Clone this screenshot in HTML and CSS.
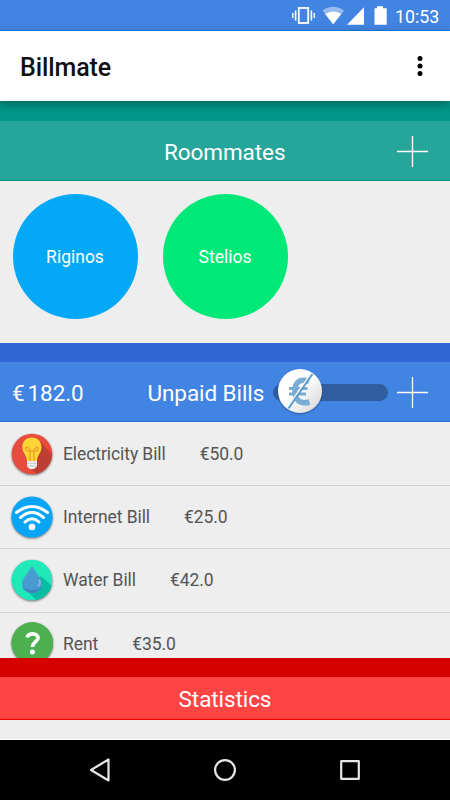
FILE: index.html
```html
<!DOCTYPE html>
<html lang="en">
<head>
    <meta charset="UTF-8">
    <meta name="viewport" content="width=device-width, initial-scale=1">
    <title>Billmate</title>
    <link rel="stylesheet" href="styles.css">
</head>
<body>
    <div class="status-bar">
        <svg class="status-icons" width="98" height="31" viewBox="0 0 98 31" fill="#fff">
            <rect x="6.800" y="8" width="9.400" height="15" fill="none" stroke="#fff" stroke-width="1.800"/>
            <path d="M0 13h1.500v5H0zM2.800 10.500h1.600v10H2.800zM18.600 10.500h1.600v10h-1.600zM21.500 13h1.500v5h-1.500z"/>
            <path d="M30.500 10.500Q41.200 3 52 10.500L41.200 24.200z" opacity=".45"/>
            <path d="M33.200 14Q41.200 9 49.200 14L41.200 24.200z"/>
            <path d="M55 24.700L72 7.200V24.700z"/>
            <path d="M82.500 8.200h2.500V6.200h6v2h3.700v16.500H82.500z"/>
        </svg>
        <span class="clock">10:53</span>
    </div>

    <header class="app-bar">
        <h1>Billmate</h1>
        <svg width="6" height="22" viewBox="0 0 6 22">
            <circle cx="3" cy="3.500" r="2.500"/><circle cx="3" cy="11" r="2.500"/><circle cx="3" cy="18.500" r="2.500"/>
        </svg>
    </header>

    <section class="roommates">
        <div class="section-header teal">
            <h2>Roommates</h2>
            <svg class="add" width="31" height="31" viewBox="0 0 31 31"><path d="M0 15.500h31M15.500 0v31"/></svg>
        </div>
        <div class="people">
            <div class="person blue">Riginos</div>
            <div class="person green">Stelios</div>
        </div>
    </section>

    <section class="bills">
        <div class="section-header blue-header">
            <span class="total"><span class="currency">€</span>182.0</span>
            <h2>Unpaid Bills</h2>
            <div class="switch">
                <div class="thumb">
                    <svg width="44" height="44" viewBox="0 0 44 44" fill="none" stroke="#78acd3">
                        <path d="M31 12.500C23 9.500 17 12 17 22C17 32 23 35.500 31.500 33" stroke-width="5.500"/>
                        <path d="M11 19.500h18.500M11 25h17" stroke-width="3.200"/>
                        <path d="M33 4.500L9.500 38" stroke="#f3f6f8" stroke-width="1.500"/>
                        <path d="M34.500 5L10.500 39.500" stroke="#5e9dca" stroke-width="2"/>
                    </svg>
                </div>
            </div>
            <svg class="add" width="31" height="31" viewBox="0 0 31 31"><path d="M0 15.500h31M15.500 0v31"/></svg>
        </div>
        <ul class="bill-list">
            <li>
                <svg class="bill-icon" width="42" height="42" viewBox="0 0 42 42">
                    <circle cx="21" cy="21" r="20.300" fill="#e74c3c"/>
                    <path d="M29 8L40.700 21.500A20.300 20.300 0 0 1 25 40.900L17 32z" fill="#bd3e32"/>
                    <path d="M21 4.500C14.500 4.500 11.300 9 11.300 14C11.300 20 16 22 16 28h10C26 22 30.500 20 30.500 14C30.500 9 27 4.500 21 4.500z" fill="#fdd535"/>
                    <path d="M19 28V18.500C13 17.500 14 13 17 14.500C18.500 15.500 19 18.500 21 18.500S23.500 15.500 25 14.500C28 13 29 17.500 23 18.500V28" fill="none" stroke="#eda22a" stroke-width="1.500"/>
                    <path d="M16 28h10v5.500l-3 2.500h-4l-3-2.500z" fill="#f2f2f2"/>
                    <path d="M16 30.200h10M16 33h10" stroke="#c5c5c5"/>
                </svg>
                <span>Electricity Bill</span><span class="amount">€50.0</span>
            </li>
            <li>
                <svg class="bill-icon" width="42" height="42" viewBox="0 0 42 42">
                    <circle cx="21" cy="21" r="20.600" fill="#08a5f7"/>
                    <g fill="none" stroke="#fff" stroke-width="3" stroke-linecap="round">
                        <path d="M5.500 16.500Q21 4.500 36.500 16.500"/>
                        <path d="M9.500 21.500Q21 11.500 32.500 21.500"/>
                        <path d="M14 26Q21 19.500 28 26"/>
                    </g>
                    <circle cx="21" cy="31" r="3.300" fill="#fff"/>
                </svg>
                <span>Internet Bill</span><span class="amount">€25.0</span>
            </li>
            <li>
                <svg class="bill-icon" width="42" height="42" viewBox="0 0 42 42">
                    <circle cx="21" cy="21" r="20.300" fill="#20e8b9"/>
                    <path d="M30 17L40.700 27A20.300 20.300 0 0 1 25 40.900L14 30z" fill="#04bda2"/>
                    <path d="M21 7C17.500 14 11 19 11 25a10 9.300 0 0 0 20 0C31 19 24.500 14 21 7z" fill="#489bd0"/>
                    <path d="M11.200 26.500Q14 31 21 31T30.800 26.500A10 9.300 0 0 1 11.200 26.500z" fill="#4280bc"/>
                    <path d="M28 20.500Q30.500 24 27 27.500" fill="none" stroke="#7eb9df" stroke-width="1.800"/>
                </svg>
                <span>Water Bill</span><span class="amount">€42.0</span>
            </li>
            <li>
                <svg class="bill-icon" width="42" height="42" viewBox="0 0 42 42">
                    <circle cx="21.300" cy="21" r="20.900" fill="#4caf50"/>
                    <path d="M16.200 15.500C17 10.500 27 10.500 27 16C27 19.500 21.500 20 21.500 25" fill="none" stroke="#fff" stroke-width="3.700"/>
                    <circle cx="21.400" cy="30" r="2.500" fill="#fff"/>
                </svg>
                <span>Rent</span><span class="amount">€35.0</span>
            </li>
        </ul>
    </section>

    <section class="statistics">
        <div class="section-header red">
            <h2>Statistics</h2>
        </div>
    </section>

    <nav class="nav-bar">
        <svg width="22" height="24" viewBox="0 0 22 24"><path d="M19.500 1.500v21L2 12z"/></svg>
        <svg width="22" height="24" viewBox="0 0 22 24"><circle cx="11" cy="12" r="9.900"/></svg>
        <svg width="22" height="24" viewBox="0 0 22 24"><rect x="2.200" y="3.200" width="17.600" height="17.600"/></svg>
    </nav>
</body>
</html>
```

FILE: styles.css
```css
* { box-sizing: border-box; }
body { margin: 0; width: 450px; height: 800px; overflow: hidden; display: flex; flex-direction: column; background-color: #eee; font-family: Roboto, "Liberation Sans", sans-serif; }
h1, h2 { margin: 0; }
svg { display: block; flex-shrink: 0; }

.status-bar { height: 31px; flex-shrink: 0; display: flex; align-items: center; justify-content: flex-end; padding-right: 10px; background-color: #4284e2; border-bottom: 1px solid #0c7be2; color: #fff; }
.status-icons { margin-right: 5px; }
.clock { width: 45px; font-size: 17.8px; line-height: 31px; padding-top: 2px; white-space: nowrap; }

.app-bar { height: 70px; flex-shrink: 0; display: flex; align-items: center; justify-content: space-between; padding: 2px 27px 0 20px; background-color: #fff; position: relative; z-index: 1; box-shadow: 0 3px 9px rgba(0, 0, 0, 0.35); }
.app-bar h1 { font-size: 25px; font-weight: 500; letter-spacing: -0.1px; color: #111; }
.app-bar svg { margin-top: -2px; }

.section-header { display: flex; align-items: center; color: #fff; }
.section-header h2 { font-size: 22.5px; font-weight: 400; letter-spacing: -0.08px; line-height: 28px; white-space: nowrap; }
.add { fill: none; stroke: #fff; stroke-width: 1.3; }

.roommates { height: 242px; flex-shrink: 0; }
.teal { height: 80px; border-top: 20px solid #009688; border-bottom: 1px solid #009688; background-color: #26a69a; padding: 2px 22px 0 164px; justify-content: space-between; }
.people { display: flex; gap: 25px; padding: 12.5px; }
.person { width: 125px; height: 125px; border-radius: 50%; display: flex; align-items: center; justify-content: center; padding-top: 1px; color: #fff; font-size: 17.5px; }
.blue { background-color: #03a9f7; }
.green { background-color: #00e878; }

.bills { height: 315px; flex-shrink: 0; overflow: hidden; }
.blue-header { height: 79px; border-top: 19px solid #3067d5; border-bottom: 1px solid #2675dd; background-color: #4284e2; padding: 2px 22px 0 12px; }
.total { width: 135.5px; font-size: 22.5px; letter-spacing: -0.1px; line-height: 28px; }
.currency { margin-right: 3px; }
.switch { width: 115px; height: 17px; margin: -1px 9px 0 auto; border-radius: 9px; background-color: #2f5d9f; }
.thumb { width: 44px; height: 44px; margin: -14.5px 0 0 5px; border-radius: 50%; background: linear-gradient(135deg, #fff 45%, #d2d2d2); box-shadow: 0 1px 2px rgba(0, 0, 0, 0.35); }

.bill-list { list-style: none; margin: 0; padding: 1px 0 0; color: #555; font-size: 17.5px; letter-spacing: -0.08px; }
.bill-list li { height: 63.2px; display: flex; align-items: center; padding-left: 11px; border-bottom: 1px solid #cfcfcf; white-space: nowrap; }
.bill-icon { margin: -1px 10px 0 0; filter: drop-shadow(0 1px 1px rgba(0, 0, 0, 0.5)); }
.amount { margin-left: 34px; }

.statistics { height: 82px; flex-shrink: 0; border-bottom: 1px solid #fff; }
.red { height: 62px; border-top: 19px solid #d50000; border-bottom: 1px solid #f00; background-color: #f44; justify-content: center; padding-top: 2px; }

.nav-bar { height: 60px; flex-shrink: 0; display: flex; align-items: center; justify-content: space-between; padding: 0 89px; background-color: #000; }
.nav-bar svg { fill: none; stroke: #e6e6e6; stroke-width: 2.2; stroke-linejoin: round; }
```
